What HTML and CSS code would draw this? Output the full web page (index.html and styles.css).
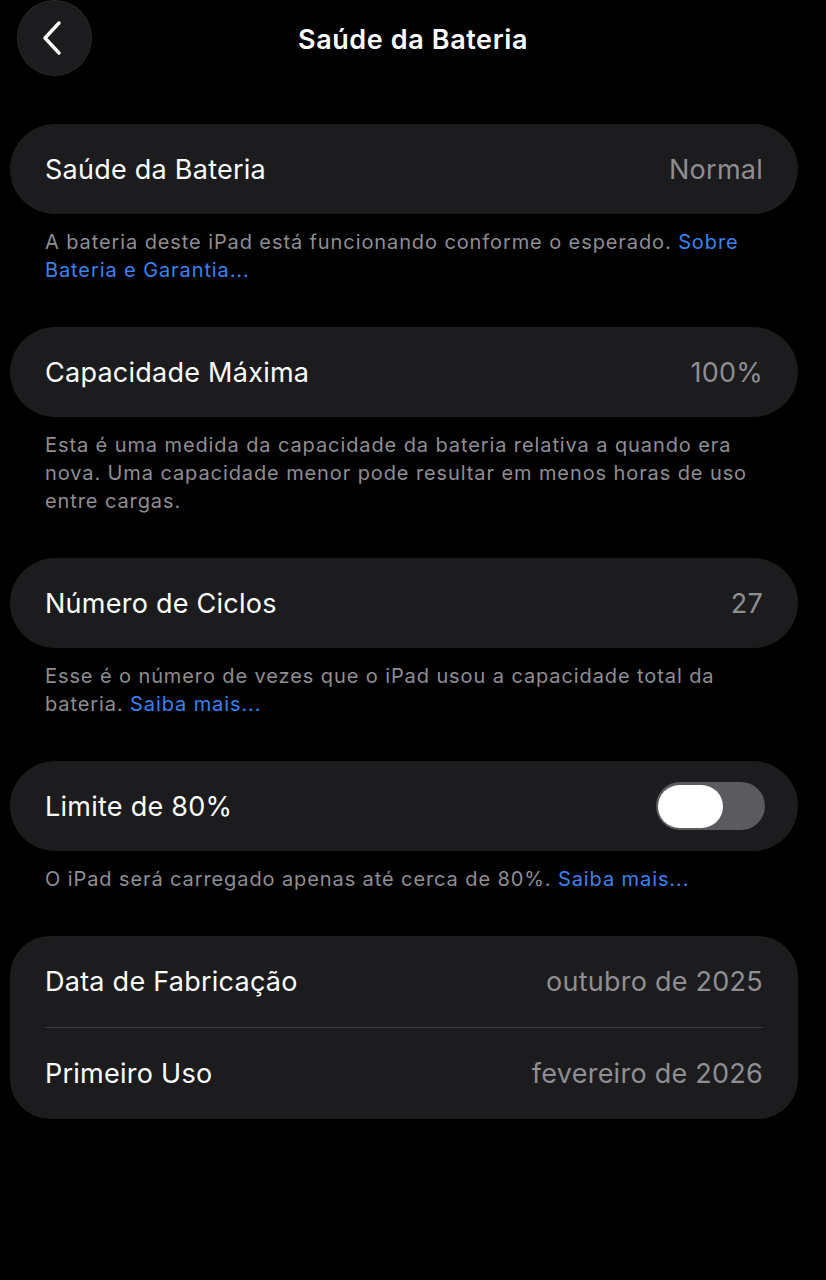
FILE: index.html
```html
<!DOCTYPE html>
<html lang="pt-BR">
<head>
<meta charset="utf-8">
<title>Saúde da Bateria</title>
<link rel="stylesheet" href="styles.css">
</head>
<body>
<header class="nav">
  <div class="nav-left">
    <button class="back" aria-label="Voltar">
      <svg width="24" height="36" viewBox="0 0 24 36"><path d="M19 3 L5 18 L19 33" fill="none" stroke="#fff" stroke-width="3.4" stroke-linecap="round" stroke-linejoin="round"/></svg>
    </button>
  </div>
  <h1 class="title">Saúde da Bateria</h1>
  <div class="nav-right"></div>
</header>
<main class="content">
  <section class="group">
    <div class="card">
      <div class="row"><span class="label">Saúde da Bateria</span><span class="value">Normal</span></div>
    </div>
    <p class="footer">A bateria deste iPad está funcionando conforme o esperado. <a class="link">Sobre Bateria e Garantia...</a></p>
  </section>
  <section class="group">
    <div class="card">
      <div class="row"><span class="label">Capacidade Máxima</span><span class="value">100%</span></div>
    </div>
    <p class="footer">Esta é uma medida da capacidade da bateria relativa a quando era nova. Uma capacidade menor pode resultar em menos horas de uso entre cargas.</p>
  </section>
  <section class="group">
    <div class="card">
      <div class="row"><span class="label">Número de Ciclos</span><span class="value">27</span></div>
    </div>
    <p class="footer">Esse é o número de vezes que o iPad usou a capacidade total da bateria. <a class="link">Saiba mais...</a></p>
  </section>
  <section class="group">
    <div class="card">
      <div class="row"><span class="label">Limite de 80%</span><span class="toggle"><span class="knob"></span></span></div>
    </div>
    <p class="footer">O iPad será carregado apenas até cerca de 80%. <a class="link">Saiba mais...</a></p>
  </section>
  <section class="group">
    <div class="card card-multi">
      <div class="row row-multi"><span class="label">Data de Fabricação</span><span class="value">outubro de 2025</span></div>
      <div class="divider"></div>
      <div class="row row-multi"><span class="label">Primeiro Uso</span><span class="value">fevereiro de 2026</span></div>
    </div>
  </section>
</main>
</body>
</html>
```

FILE: styles.css
```css
* { box-sizing: border-box; }
html, body { margin: 0; padding: 0; background: #000; }
body {
  width: 826px;
  min-height: 1280px;
  font-family: Inter, "Noto Sans", "DejaVu Sans", sans-serif;
  color: #fff;
}
.nav {
  display: grid;
  grid-template-columns: 1fr auto 1fr;
  align-items: center;
  height: 78px;
}
.nav-left { display: flex; align-items: flex-start; height: 78px; }
.back {
  margin-left: 17px;
  width: 75px;
  height: 76px;
  border-radius: 50%;
  background: #1c1c1e;
  border: 1px solid #2a2a2c;
  display: flex;
  align-items: center;
  justify-content: center;
  padding: 0 6px 0 0;
  cursor: pointer;
}
.title {
  margin: 0;
  font-size: 27px;
  font-weight: 600;
  letter-spacing: 0.6px;
  color: #fff;
}
.content {
  padding: 46px 28px 0 10px;
}
.group { margin-bottom: 43px; }
.card {
  background: #1c1c1e;
  border-radius: 45px;
  padding: 0 35px;
}
.card-multi { border-radius: 40px; }
.row {
  height: 90px;
  display: flex;
  align-items: center;
  justify-content: space-between;
}
.row-multi { height: 91px; }
.label {
  font-size: 27px;
  letter-spacing: 0.25px;
  color: #fff;
}
.value {
  font-size: 27px;
  letter-spacing: 0.25px;
  color: #8e8e93;
}
.divider {
  height: 1px;
  background: #38383a;
}
.footer {
  margin: 0;
  padding: 14px 35px 0;
  font-size: 20px;
  line-height: 28px;
  color: #8e8e93;
  letter-spacing: 0.9px;
}
.link { color: #3b82f0; }
.toggle {
  width: 109px;
  height: 48px;
  border-radius: 24px;
  background: #5a5a5f;
  display: flex;
  align-items: center;
  padding: 0 2px;
  margin-right: -2px;
}
.knob {
  width: 65px;
  height: 43px;
  border-radius: 22px;
  background: #fff;
}
```
